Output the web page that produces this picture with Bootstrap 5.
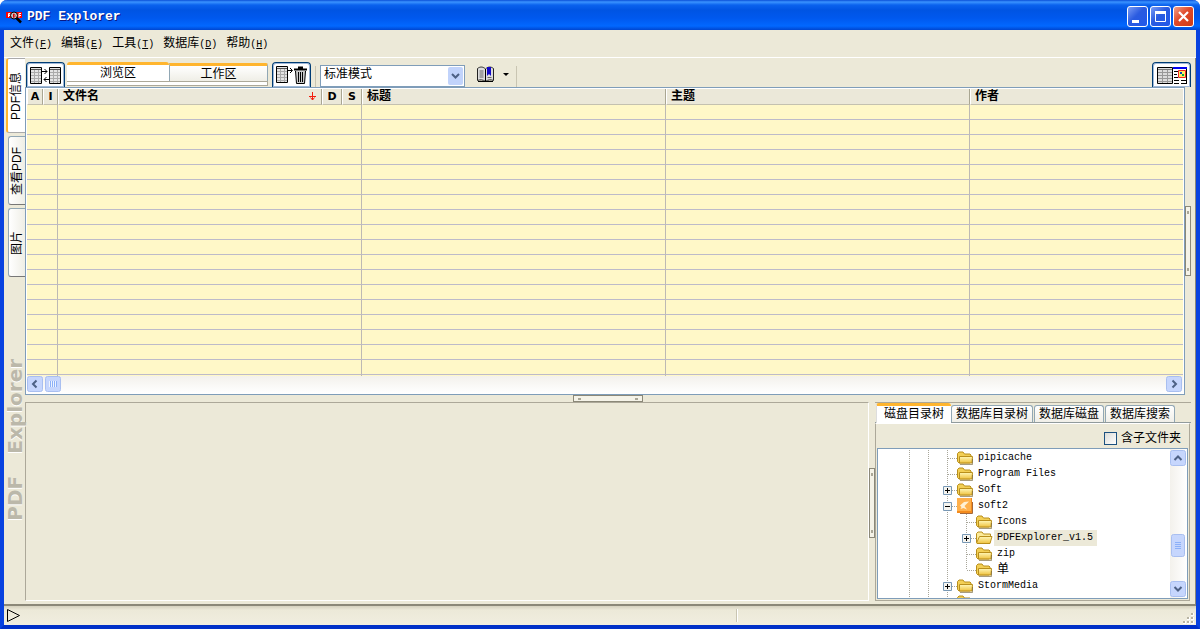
<!DOCTYPE html>
<html lang="zh-CN">
<head>
<meta charset="utf-8">
<meta name="viewport" content="width=device-width, initial-scale=1">
<title>PDF Explorer</title>
<link href="https://cdn.jsdelivr.net/npm/bootstrap@5.3.0/dist/css/bootstrap.min.css" rel="stylesheet">
<style>
:root{--face:#ece9d8;--shade:#aca899;--edge:#7f9db9;--orange:#ffb52e;--navy:#003c74}
body{font:12px/16px "Liberation Sans","Noto Sans CJK SC",sans-serif;color:#000;background:#fff;overflow:hidden}
button{font:inherit;color:inherit;padding:0;border:0;background:none}
svg{display:block;flex:none}
.mono{font-family:"Liberation Mono","Noto Sans CJK SC",monospace;font-size:10px}
.app{background:var(--face);border:4px solid #0842e0;border-top:0;border-bottom-color:#0030c8;border-radius:7px 7px 0 0}
.titlebar{height:30px;margin:0 -4px;padding:3px 6px 0 6px;border-radius:7px 7px 0 0;color:#fff;background:linear-gradient(#0a4fd8 0,#3a93ff 2px,#0a62ee 5px,#0054e3 10px,#0058ee 18px,#0268ff 26px,#0046d0 30px)}
.titlebar h1{font:bold 13px/20px "Liberation Mono",monospace;text-shadow:1px 1px #0a1883;margin:0}
.cap{width:21px;height:21px;border:1px solid #fff;border-radius:3px;background:linear-gradient(135deg,#7a9cf5,#2a5be0 45%,#2158ea)}
.cap.shut{background:linear-gradient(135deg,#f0a088,#e0492a 45%,#cf3c16)}
.menus{height:28px;padding:0 6px;gap:9px;border-bottom:1px solid #fff}
.menus button{height:24px}
.work{border-right:1px solid #8b8878;border-bottom:2px solid #8b8878;min-height:0}
.rail{width:21px;gap:3px}
.vtab{writing-mode:vertical-rl;text-orientation:sideways;transform:rotate(180deg);width:17px;height:69px;line-height:13px;border:1px solid #91a7b4;border-left:0;border-top-color:#777;border-radius:0 3px 3px 0;background:linear-gradient(90deg,#efeee6,#fff)}
.vtab.on{width:19px;height:75px;line-height:15px;border-color:#aaa;border-right:2px solid var(--orange);background:#fff}
.brand{writing-mode:vertical-rl;text-orientation:sideways;transform:rotate(180deg);font:bold 20px/20px "DejaVu Sans",sans-serif;color:#bbb8aa;text-shadow:-1px 0 #fff;margin-bottom:83px;gap:22px}
.tools{height:29px;padding-top:4px;padding-left:1px}
.tbtn{width:39px;height:25px;background:#fff;border:1px solid var(--navy);box-shadow:inset 0 0 0 1px #9fb8d8;border-bottom:0;border-radius:4px 4px 0 0}
.views{width:201px;margin:0 4px 0 2px}
.views .base{height:5px;background:#fff;border:1px solid var(--shade);border-left:0}
.view1{width:102px;background:#fff;border-top:3px solid var(--orange);border-radius:3px 3px 0 0;line-height:14px}
.view2{height:18px;margin-top:1px;border-top:3px solid var(--orange);border-right:1px solid #91a7b4;border-left:1px solid #91a7b4;background:linear-gradient(#fff,#efeee6);border-radius:0 2px 0 0;line-height:14px}
.vr1{width:1px;height:21px;background:#c9c5b2}
.mode{width:145px;height:22px;margin-top:3px;appearance:none;border:1px solid var(--edge);border-radius:0;padding:0 20px 4px 3px;font:inherit;line-height:16px;background:#fff url("data:image/svg+xml,%3Csvg xmlns='http://www.w3.org/2000/svg' width='15' height='18'%3E%3Crect width='15' height='18' rx='2' fill='%23c1d3fb'/%3E%3Cpath d='M4 7l3.500 3.500L11 7' fill='none' stroke='%234d6185' stroke-width='2'/%3E%3C/svg%3E") no-repeat right 1px center}
.listbox{border:1px solid var(--edge);background:#fff;padding:1px}
.rows{background:#fff8c8}
.grid{width:100%;table-layout:fixed;border-collapse:separate;border-spacing:0}
.grid th{height:16px;line-height:15px;padding:0 0 0 4px;background:#ebe8d9;border:0 solid;border-right:1px solid #a9a692;border-left:1px solid #fff;border-bottom:1px solid #c4c1b0;white-space:nowrap}
.grid th.tiny{padding:0;text-align:center;font:bold 11px/15px "DejaVu Sans",sans-serif}
.grid td{height:15px;padding:0;border-bottom:1px solid #bdbbc9;border-right:1px solid #bdb9b4}
.grid th:last-child,.grid td:last-child{border-right:0}
.sb{background:linear-gradient(#f3f1ec,#fff)}
.sb.down{background:linear-gradient(90deg,#f3f1ec,#fff);width:17px}
.grip-bar{border:1px solid #8b8878;background:#f5f3e8;padding:1px 4px}
.grip-bar i{width:3px;height:2px;background:#aaa797}
.grip-bar.tall{padding:4px 1px}.grip-bar.tall i{width:2px;height:3px}
.hbar{width:70px;height:7px}.vbar{width:6px;height:70px}
.lower{height:202px}
.preview{border:1px solid var(--shade);border-right-color:#fff;border-bottom-color:#fff;margin-bottom:3px}
.side{width:316px;border-top:1px solid var(--shade);margin-bottom:3px}
.tabs{height:20px;border-bottom:1px solid #919b9c;gap:1px}
.tabs button{height:17px;padding:0 4px;border:1px solid #91a7b4;border-bottom:0;border-radius:3px 3px 0 0;background:linear-gradient(#fff,#f0efe8);line-height:15px;white-space:nowrap}
.tabs button.on{height:20px;padding:0 7px;border-top:3px solid var(--orange);border-right:0;border-left-color:#ddd;background:#fff;margin:0 -1px -1px 1px;line-height:13px}
.tabpage{border:1px solid var(--shade);border-top-color:#fff;padding:0 1px 1px 1px;margin-right:1px}
.opt{height:24px;padding:4px 7px 0 0;gap:4px}
.opt input{appearance:none;width:13px;height:13px;border:1px solid #1c5180;background:linear-gradient(135deg,#dcdcd7,#fff);margin:0}
.tree{padding:1px 0 0 22px;min-width:0}
.node{height:16px;line-height:16px}
.node .mono{padding:0 3px;margin-left:1px;white-space:nowrap}
.node .sel{background:var(--face);padding-right:4px}
.node .han{font-size:12px}
.status{height:19px;background:linear-gradient(#d5d1be,#ece9d8 4px,#f1eee0);padding:0 1px 0 3px}
</style>
</head>
<body>
<svg width="0" height="0" class="position-absolute" aria-hidden="true">
<defs>
<linearGradient id="gold" x2="0" y2="1"><stop stop-color="#fff7b8"/><stop offset="1" stop-color="#efc23e"/></linearGradient>
<symbol id="folder" viewBox="0 0 17 16"><path d="M.5 11.500v-8l1.500-1.500h4l1.500 2h5.500l1 1v7l-1 1H2z" fill="#f3cf55" stroke="#b98f1c"/><path d="M2.500 13V6.500h13l-.5 6.500z" fill="url(#gold)" stroke="#b98f1c"/><path d="M3 14.500h12.500V9" fill="none" stroke="#6d5a2b" opacity=".6"/></symbol>
<symbol id="opened" viewBox="0 0 17 16"><path d="M.5 12.500v-9l1.500-1.500h4l1.500 2h7v3" fill="#fdeb99" stroke="#b98f1c"/><path d="M.5 13l3-6.500h12.500l-2 7H1z" fill="url(#gold)" stroke="#b98f1c"/></symbol>
<symbol id="special" viewBox="0 0 17 16"><path d="M0 0h15v15H0z" fill="#f38b1e"/><path d="M0 0h14v13H0z" fill="#ffb04b"/><path d="M12 3.500L7 4 3 7.500 4.500 9 3.500 11l3-1 3.500 1.500L7.500 8z" fill="#fff1d4"/><path d="M15.500 4v11.500H3" fill="none" stroke="#a5683a"/></symbol>
<symbol id="gv" viewBox="0 0 19 16"><path d="M9.500 0v16" stroke="#a8a69a" stroke-dasharray="1 1"/></symbol>
<symbol id="gt" viewBox="0 0 19 16"><path d="M9.500 0v16M10 8.500h9" stroke="#a8a69a" stroke-dasharray="1 1"/></symbol>
<symbol id="gl" viewBox="0 0 19 16"><path d="M9.500 0v8M10 8.500h9" stroke="#a8a69a" stroke-dasharray="1 1"/></symbol>
<symbol id="gm" viewBox="0 0 19 16"><use href="#gt"/><path d="M5.500 4.500h8v8h-8z" fill="#f5f4ef" stroke="#7898b5"/><path d="M7 8.500h5" stroke="#000"/></symbol>
<symbol id="gp" viewBox="0 0 19 16"><use href="#gm"/><path d="M9.500 6v5" stroke="#000"/></symbol>
<symbol id="sheet" viewBox="0 0 12 17"><path d="M.5.5h11v16H.5z" fill="#e4e4e4" stroke="#000"/><path d="M1 5.500h10M1 8.500h10M1 11.500h10M1 14.500h10M4.500 3v13M8.500 3v13" stroke="#aaa"/><path d="M1 2.500h10" stroke="#555"/></symbol>
<symbol id="sbtn" viewBox="0 0 16 16"><rect x=".5" y=".5" width="15" height="15" rx="2" fill="#c6d6fd" stroke="#a9bff0"/></symbol>
</defs></svg>

<div class="app vh-100 d-flex flex-column">
 <header class="titlebar d-flex align-items-center flex-shrink-0">
  <svg width="17" height="14" class="me-1"><path d="M0 2h16v6H0z" fill="#f00"/><path d="M2.500 7V3.500h1.500v2H2.500M13 7.500V3.500h2M13 5.500h2" stroke="#fff" fill="none"/><circle cx="8" cy="5.500" r="3.500" fill="#c8c0c0" stroke="#000"/><path d="M7.500 4v3.500c2 0 2-3.500 0-3.500" stroke="#d00" fill="none"/><path d="M10.500 8l4.500 4.500" stroke="#000" stroke-width="2.500"/></svg>
  <h1 class="me-auto">PDF Explorer</h1>
  <div class="d-flex" style="gap:2px">
   <button class="cap" aria-label="最小化"><svg width="19" height="19"><path d="M4 13h7v3H4z" fill="#fff"/></svg></button>
   <button class="cap" aria-label="最大化"><svg width="19" height="19"><path d="M4.500 5.500h10v9h-10z" fill="none" stroke="#fff"/><path d="M4 4h11v3H4z" fill="#fff"/></svg></button>
   <button class="cap shut" aria-label="关闭"><svg width="19" height="19"><path d="M5 5l9 9m0-9l-9 9" stroke="#fff" stroke-width="2.200"/></svg></button>
  </div>
 </header>

 <nav class="menus d-flex align-items-center flex-shrink-0">
  <button>文件<span class="mono">(<u>F</u>)</span></button>
  <button>编辑<span class="mono">(<u>E</u>)</span></button>
  <button>工具<span class="mono">(<u>T</u>)</span></button>
  <button>数据库<span class="mono">(<u>D</u>)</span></button>
  <button>帮助<span class="mono">(<u>H</u>)</span></button>
 </nav>

 <main class="work d-flex flex-grow-1">
  <aside class="rail d-flex flex-column align-items-end flex-shrink-0">
   <button class="vtab on">PDF信息</button>
   <button class="vtab">查看PDF</button>
   <button class="vtab">图片</button>
   <div class="brand d-flex mt-auto"><span>PDF</span><span>Explorer</span></div>
  </aside>

  <div class="d-flex flex-column flex-grow-1 overflow-hidden pe-1">
   <div class="tools d-flex flex-shrink-0">
    <button class="tbtn d-flex justify-content-center align-items-center" aria-label="交换"><svg width="31" height="17"><use href="#sheet" width="12" height="17"/><use href="#sheet" x="19" width="12" height="17"/><path d="M12 4.500h5M14.500 2l2.500 2.500L14.500 7M19 12.500h-5M16.500 10L14 12.500l2.500 2.500" fill="none" stroke="#000"/></svg></button>
    <div class="views d-flex flex-column">
     <div class="d-flex">
      <button class="view1">浏览区</button>
      <button class="view2 flex-grow-1">工作区</button>
     </div>
     <div class="base"></div>
    </div>
    <button class="tbtn d-flex justify-content-center align-items-center" aria-label="移除"><svg width="31" height="18"><use href="#sheet" width="12" height="17"/><path d="M12 4.500h4M14 2l2.500 2.500L14 7" fill="none" stroke="#000"/><path d="M18 3.500h13M22 1.500h5" stroke="#000" stroke-width="2"/><path d="M19.500 5l1 12.500h8l1-12.500" fill="#ccc" stroke="#000"/><path d="M22.500 6v10M24.500 6v10M26.500 6v10" stroke="#000"/></svg></button>
    <span class="vr1 mx-1 mt-1"></span>
    <select class="mode" aria-label="模式"><option>标准模式</option></select>
    <button class="d-flex align-items-center ms-2" aria-label="书签"><svg width="17" height="17" class="ms-1"><path d="M.5 2.500C3 .5 6 .5 8.500 3 11 .5 14 .5 16.500 2.500v12c-2.500-1-5.500-1-8 1-2.500-2-5.500-2-8-1z" fill="#ddd" stroke="#222"/><path d="M8.500 3v13M1 15.500h15" stroke="#000"/><path d="M2.500 5h4M2.500 7h4M2.500 9h4M2.500 11h4M10.500 11.500h4" stroke="#666"/><path d="M10 1h4v9l-2-2-2 2z" fill="#1208c8"/></svg><svg width="22" height="4"><path d="M9 0h6L12 3z"/></svg></button>
    <span class="vr1 mt-1"></span>
    <button class="tbtn ms-auto d-flex justify-content-center align-items-center" aria-label="布局"><svg width="30" height="17"><path d="M.5.500h15v16H.5z" fill="#ddd" stroke="#000"/><path d="M1 2.500h14" stroke="#777"/><path d="M1 5.500h14M1 8.500h14M1 11.500h14M1 14.500h14M5.500 3v13M10.500 3v13" stroke="#999"/><path d="M16 0h14v17H16z" fill="#fff"/><path d="M16 0h14v2H16z" fill="#00e"/><path d="M17 4.500h4M17 7.500h3M17 10.500h4M17 13.500h5M24 13.500h5M17 16.500h5M24 16.500h5M29.500 2v15" stroke="#000"/><path d="M21.500 3.500h7v7h-7z" fill="#ffe860" stroke="#e22"/><path d="M23 5h2v2h-2z" fill="#04b"/><path d="M25 7h2v2h-2z" fill="#0a4"/></svg></button>
   </div>

   <div class="d-flex flex-grow-1 overflow-hidden">
    <div class="listbox d-flex flex-column flex-grow-1 overflow-hidden">
     <div class="rows flex-grow-1 overflow-hidden">
      <table class="grid">
       <colgroup><col style="width:16px"><col style="width:15px"><col style="width:264px"><col style="width:20px"><col style="width:20px"><col style="width:304px"><col style="width:304px"><col></colgroup>
       <thead><tr><th class="tiny">A</th><th class="tiny">I</th><th><div class="d-flex align-items-center justify-content-between pe-1">文件名<svg width="9" height="9" class="flex-shrink-0"><path d="M4.500 0v8M1 4.500h7M2.500 5.500l2 2.500L6.500 5.500" stroke="#f21c0c" fill="none"/></svg></div></th><th class="tiny">D</th><th class="tiny">S</th><th>标题</th><th>主题</th><th>作者</th></tr></thead>
       <tbody id="lines"></tbody>
      </table>
     </div>
     <div class="sb d-flex flex-shrink-0">
      <svg width="16" height="17"><use href="#sbtn" width="16" height="16"/><path d="M9.500 4.500L6 8l3.500 3.500" fill="none" stroke="#4d6185" stroke-width="2"/></svg>
      <svg width="18" height="17" class="me-auto"><use href="#sbtn" x="2" width="16" height="16"/><path d="M6.500 5v6M8.500 5v6M10.500 5v6M12.500 5v6" stroke="#eef4fe"/><path d="M7.500 5v6M9.500 5v6M11.500 5v6M13.500 5v6" stroke="#8cb0f8"/></svg>
      <svg width="17" height="17"><use href="#sbtn" width="16" height="16"/><path d="M6.500 4.500L10 8l-3.500 3.500" fill="none" stroke="#4d6185" stroke-width="2"/></svg>
     </div>
    </div>
    <div class="d-flex align-items-center flex-shrink-0"><div class="grip-bar tall vbar d-flex flex-column justify-content-between"><i></i><i></i></div></div>
   </div>

   <div class="d-flex justify-content-center flex-shrink-0"><div class="grip-bar hbar d-flex justify-content-between align-items-center"><i></i><i></i></div></div>

   <div class="lower d-flex flex-shrink-0">
    <section class="preview flex-grow-1"></section>
    <div class="d-flex align-items-center"><div class="grip-bar tall vbar d-flex flex-column justify-content-between"><i></i><i></i></div></div>
    <section class="side d-flex flex-column flex-shrink-0">
     <div class="tabs d-flex align-items-end flex-shrink-0">
      <button class="on">磁盘目录树</button><button>数据库目录树</button><button>数据库磁盘</button><button>数据库搜索</button>
     </div>
     <div class="tabpage flex-grow-1 d-flex flex-column overflow-hidden">
      <div class="opt d-flex justify-content-end align-items-center flex-shrink-0"><input type="checkbox" id="sub"><label for="sub">含子文件夹</label></div>
      <div class="listbox p-0 d-flex flex-grow-1 overflow-hidden">
       <div class="tree flex-grow-1 overflow-hidden" id="tree"></div>
       <div class="sb down d-flex flex-column flex-shrink-0">
        <svg width="16" height="17"><use href="#sbtn" y="1" width="16" height="16"/><path d="M4.500 11L8 7.500l3.500 3.500" fill="none" stroke="#4d6185" stroke-width="2"/></svg>
        <svg width="16" height="23" class="mt-auto"><rect x="1.500" y=".5" width="13" height="22" rx="2" fill="#c6d6fd" stroke="#a9bff0"/><path d="M5 8.500h6M5 10.500h6M5 12.500h6M5 14.500h6" stroke="#8cb0f8"/></svg>
        <svg width="16" height="17" class="mt-4"><use href="#sbtn" width="16" height="16"/><path d="M4.500 6L8 9.500 11.500 6" fill="none" stroke="#4d6185" stroke-width="2"/></svg>
       </div>
      </div>
     </div>
    </section>
   </div>
  </div>
 </main>

 <footer class="status d-flex align-items-center flex-shrink-0">
  <svg width="14" height="15"><path d="M.5 1.500l12 6-12 6z" fill="none" stroke="#000"/></svg>
  <span class="vr1 ms-auto border-end border-white" style="margin-right:37.5%;width:2px;height:13px"></span>
  <svg width="12" height="12" class="align-self-end"><path d="M8 0h3v3H8zM4 4h3v3H4zM8 4h3v3H8zM0 8h3v3H0zM4 8h3v3H4zM8 8h3v3H8z" fill="#fff"/><path d="M8 0h2v2H8zM4 4h2v2H4zM8 4h2v2H8zM0 8h2v2H0zM4 8h2v2H4zM8 8h2v2H8z" fill="#b8b4a2"/></svg>
 </footer>
</div>

<script>
document.getElementById('lines').innerHTML =
  '<tr><td colspan="2"></td><td colspan="3"></td><td></td><td></td><td></td></tr>'.repeat(60);

// Each node: guide cells (v line, t tee, l last, p plus, m minus), icon, label, label class
const nodes = [
  ['vvt','folder','pipicache',''],
  ['vvt','folder','Program Files',''],
  ['vvp','folder','Soft',''],
  ['vvm','special','soft2',''],
  ['vvvt','folder','Icons',''],
  ['vvvp','opened','PDFExplorer_v1.5','sel'],
  ['vvvt','folder','zip',''],
  ['vvvl','folder','单','han'],
  ['vvp','folder','StormMedia',''],
  ['vvt','folder','','']
];
document.getElementById('tree').innerHTML = nodes.map(([g,icon,name,cls]) =>
  '<div class="node d-flex">' +
  [...g].map(c => `<svg width="19" height="16"><use href="#g${c}"/></svg>`).join('') +
  `<svg width="17" height="16"><use href="#${icon}"/></svg><span class="mono ${cls}">${name}</span></div>`).join('');
</script>
<script src="https://cdn.jsdelivr.net/npm/bootstrap@5.3.0/dist/js/bootstrap.bundle.min.js"></script>
</body>
</html>
